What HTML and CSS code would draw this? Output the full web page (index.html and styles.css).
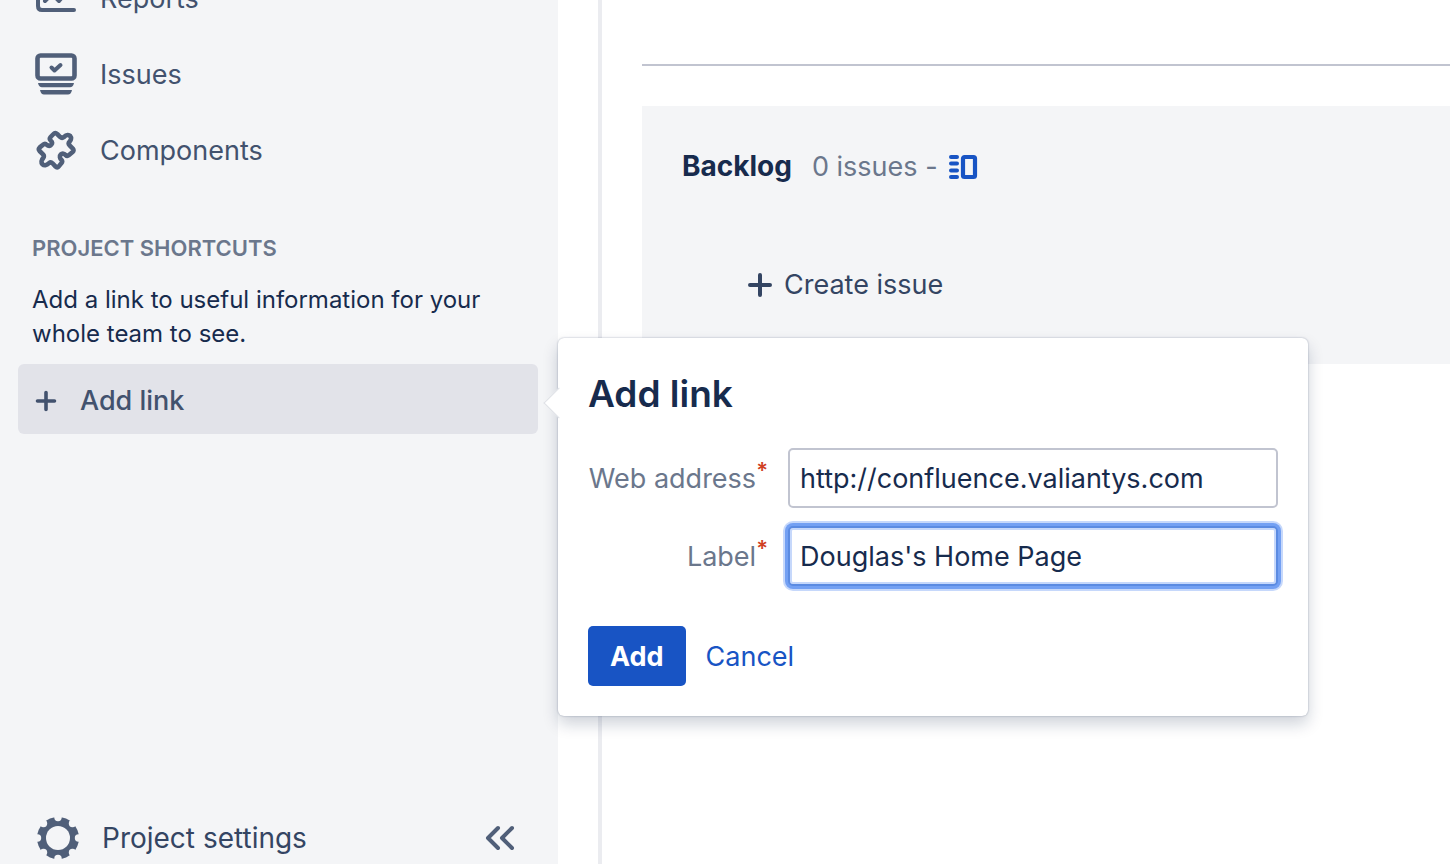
FILE: index.html
```html
<!DOCTYPE html>
<html lang="en">
<head>
    <meta charset="UTF-8">
    <meta name="viewport" content="width=device-width, initial-scale=1.0">
    <title>Backlog</title>
    <link rel="stylesheet" href="styles.css">
</head>
<body>

    <div class="sidebar">
        <nav class="nav">
            <a href="#" class="nav-item">
                <svg class="icon" viewBox="0 0 44 44" fill="none" stroke="currentColor" stroke-width="4" stroke-linecap="round" stroke-linejoin="round">
                    <path d="M4 6V30Q4 34 8 34H40M11 25L18 18L25 25L36 12"/>
                </svg>
                <span>Reports</span>
            </a>
            <a href="#" class="nav-item">
                <svg class="icon" viewBox="0 0 44 44" fill="none" stroke="currentColor" stroke-width="4" stroke-linecap="round" stroke-linejoin="round">
                    <rect x="3.500" y="3.500" width="37" height="23" rx="3" stroke-width="4.600"/>
                    <path d="M17.500 15.500L20.500 18.500L26.500 13"/>
                    <path d="M4 31H40Q39 35.300 36 35.300H8Q5 35.300 4 31ZM6 38H38Q37 42.500 34 42.500H10Q7 42.500 6 38Z" fill="currentColor" stroke="none"/>
                </svg>
                <span>Issues</span>
            </a>
            <a href="#" class="nav-item">
                <svg class="icon" viewBox="-2 -2 44 44" fill="none" stroke="currentColor" stroke-width="4.600" stroke-linecap="round" stroke-linejoin="round">
                    <path d="M17.500 4Q19.300 2 21.200 4L24 6.800Q26 8.600 28 7C30.500 4.500 33 4.800 34.200 6C35.500 7.500 35.300 9.800 33.600 11.600Q31.800 13.600 33.600 15.400L36.800 18.600Q38.400 20.400 36.600 22L33 25Q31.200 26.600 29.600 25C28.500 23.600 26.300 23 24.800 24.500C23.300 26 23.800 28.500 25.300 29.600Q27 31.400 25.200 33.400L22.800 36.400Q21.200 38.400 19.400 36.400L16.500 33.300Q14.800 31.600 13 33.200C10.600 35.600 8 35.600 6.400 34.200C5 32.600 5.200 30 7.200 28Q8.600 26.200 7 24.400L3.600 21Q2 19.200 3.800 17.400L7 14.800Q9 13 10.800 14.800C12.300 16.200 14 16.200 15.200 14.800C16.400 13.400 16.300 12 14.800 10.600Q13 8.800 14.600 7Z"/>
                </svg>
                <span>Components</span>
            </a>
        </nav>

        <div class="shortcuts">
            <h2>PROJECT SHORTCUTS</h2>
            <p>Add a link to useful information for your whole team to see.</p>

            <div class="add-link">
                <button type="button" class="add-link-button">
                    <svg class="plus" viewBox="0 0 24 24" fill="none" stroke="currentColor" stroke-width="3.600" stroke-linecap="round">
                        <path d="M12 3.500V20.500M3.500 12H20.500"/>
                    </svg>
                    Add link
                </button>

                <form class="popup">
                    <h1>Add link</h1>
                    <div class="fields">
                        <label for="address">Web address<span class="required">*</span></label>
                        <input type="text" id="address" value="http://confluence.valiantys.com">
                        <label for="label">Label<span class="required">*</span></label>
                        <input type="text" id="label" class="focused" value="Douglas's Home Page">
                    </div>
                    <div class="actions">
                        <button type="button" class="button">Add</button>
                        <a href="#">Cancel</a>
                    </div>
                </form>
            </div>
        </div>

        <div class="sidebar-footer">
            <a href="#" class="settings">
                <svg class="icon" viewBox="-22 -22 44 44">
                    <defs>
                        <mask id="teeth">
                            <rect x="-22" y="-22" width="44" height="44" fill="white"/>
                            <circle r="12" fill="black"/>
                            <g fill="black">
                                <circle cx="0" cy="-20.500" r="3.700"/>
                                <circle cx="14.500" cy="-14.500" r="3.700"/>
                                <circle cx="20.500" cy="0" r="3.700"/>
                                <circle cx="14.500" cy="14.500" r="3.700"/>
                                <circle cx="0" cy="20.500" r="3.700"/>
                                <circle cx="-14.500" cy="14.500" r="3.700"/>
                                <circle cx="-20.500" cy="0" r="3.700"/>
                                <circle cx="-14.500" cy="-14.500" r="3.700"/>
                            </g>
                        </mask>
                    </defs>
                    <circle r="21" fill="currentColor" mask="url(#teeth)"/>
                </svg>
                <span>Project settings</span>
            </a>
            <button type="button" class="collapse" aria-label="Collapse sidebar">
                <svg viewBox="0 0 32 28" fill="none" stroke="currentColor" stroke-width="4" stroke-linecap="round" stroke-linejoin="round">
                    <path d="M14 4L4 14L14 24M28 4L18 14L28 24"/>
                </svg>
            </button>
        </div>
    </div>

    <main class="main">
        <hr>
        <section class="backlog">
            <div class="backlog-header">
                <h2>Backlog</h2>
                <span class="count">0 issues -</span>
                <svg class="panel-icon" viewBox="0 0 30 26" fill="none" stroke="currentColor" stroke-linecap="round">
                    <path d="M3 3H9M3 9.500H9M3 16.500H9M3 23H9" stroke-width="4"/>
                    <rect x="15" y="3" width="12" height="20" rx="1.500" stroke-width="4.200"/>
                </svg>
            </div>
            <button type="button" class="create">
                <svg class="plus" viewBox="0 0 24 24" fill="none" stroke="currentColor" stroke-width="4" stroke-linecap="round">
                    <path d="M12 2V22M2 12H22"/>
                </svg>
                Create issue
            </button>
        </section>
    </main>

</body>
</html>
```
FILE: styles.css
```css
* {
    box-sizing: border-box;
}
body {
    display: flex;
    height: 100vh;
    margin: 0;
    overflow: hidden;
    font-family: Inter, sans-serif;
    font-size: 27px;
    line-height: 37px;
    color: #172b4d;
    background-color: white;
}
h1, h2, p {
    margin: 0;
}
a {
    color: #1854c4;
    text-decoration: none;
}
button {
    font: inherit;
    color: inherit;
    border: none;
    background: none;
    padding: 0;
    cursor: pointer;
}
svg {
    display: block;
    flex-shrink: 0;
}

/* Sidebar */
.sidebar {
    display: flex;
    flex-direction: column;
    flex: 0 0 558px;
    background-color: #f4f5f7;
}
.nav {
    margin-top: -40px;
}
.nav-item, .settings {
    display: flex;
    align-items: center;
    gap: 22px;
    color: #42526e;
}
.nav-item {
    height: 76px;
    padding: 0 34px;
}
.icon {
    width: 44px;
    height: 44px;
    color: #505f79;
}
.shortcuts {
    padding: 42px 20px 0 18px;
}
.shortcuts h2 {
    padding: 0 14px;
    font-size: 22px;
    font-weight: 600;
    line-height: 36px;
    color: #6b778c;
}
.shortcuts p {
    padding: 17px 14px 13px;
    font-size: 24px;
    line-height: 34px;
}
.add-link {
    position: relative;
}
.add-link-button {
    display: flex;
    align-items: center;
    gap: 22px;
    width: 100%;
    height: 70px;
    padding: 3px 16px 0;
    border-radius: 6px;
    background-color: #e2e3e9;
    font-weight: 500;
    color: #42526e;
}
.plus {
    width: 24px;
    height: 24px;
}
.sidebar-footer {
    display: flex;
    align-items: center;
    justify-content: space-between;
    height: 52px;
    margin-top: auto;
    padding: 0 42px 0 36px;
}
.settings {
    font-size: 28px;
    color: #344563;
}
.collapse {
    width: 32px;
    color: #505f79;
}

/* Popup */
.popup {
    position: absolute;
    top: -26px;
    left: 540px;
    width: 750px;
    padding: 35px 30px 30px;
    border-radius: 6px;
    background-color: white;
    box-shadow: 0 0 2px rgba(9, 30, 66, 0.35), 0 8px 16px rgba(9, 30, 66, 0.2);
}
.popup::before {
    content: "";
    position: absolute;
    top: 54px;
    left: -10px;
    width: 21px;
    height: 21px;
    background-color: white;
    border-left: 1px solid #dfe1e6;
    border-bottom: 1px solid #dfe1e6;
    transform: rotate(45deg);
}
.popup h1 {
    font-size: 37px;
    font-weight: 600;
    line-height: 42px;
}
.fields {
    display: grid;
    grid-template-columns: 180px 1fr;
    gap: 18px 20px;
    margin-top: 33px;
}
.fields label {
    display: flex;
    align-items: center;
    justify-content: flex-end;
    color: #6b778c;
}
.required {
    align-self: flex-start;
    padding-top: 4px;
    font-size: 22px;
    font-weight: 600;
    color: #d04022;
}
.fields input {
    width: 100%;
    height: 60px;
    padding: 0 10px;
    border: 2px solid #c1c4d0;
    border-radius: 5px;
    outline: none;
    font: inherit;
    color: #172b4d;
}
.fields .focused {
    border-color: #5b8be2;
    box-shadow: 0 0 0 3px #73a0f3, 0 0 0 5px #c6d8fb, inset 0 0 0 2px #c6d8fb;
}
.actions {
    display: flex;
    align-items: center;
    gap: 20px;
    margin-top: 40px;
}
.button {
    height: 60px;
    padding: 0 22px;
    border-radius: 5px;
    background-color: #1854c4;
    font-weight: 700;
    color: white;
}

/* Backlog */
.main {
    flex: 1;
    margin-left: 40px;
    padding: 64px 0 0 40px;
    border-left: 4px solid #ebecf0;
}
hr {
    height: 2px;
    margin: 0 0 40px;
    border: none;
    background-color: #c1c4d0;
}
.backlog {
    padding: 42px 40px 61px;
    background-color: #f4f5f7;
}
.backlog-header {
    display: flex;
    align-items: center;
}
.backlog h2 {
    margin-right: 20px;
    font-size: 28px;
    font-weight: 700;
}
.count {
    margin-right: 10px;
    color: #6b778c;
}
.panel-icon {
    width: 30px;
    height: 26px;
    color: #1854c4;
}
.create {
    display: flex;
    align-items: center;
    gap: 12px;
    margin: 81px 0 0 66px;
    color: #344563;
}
```
